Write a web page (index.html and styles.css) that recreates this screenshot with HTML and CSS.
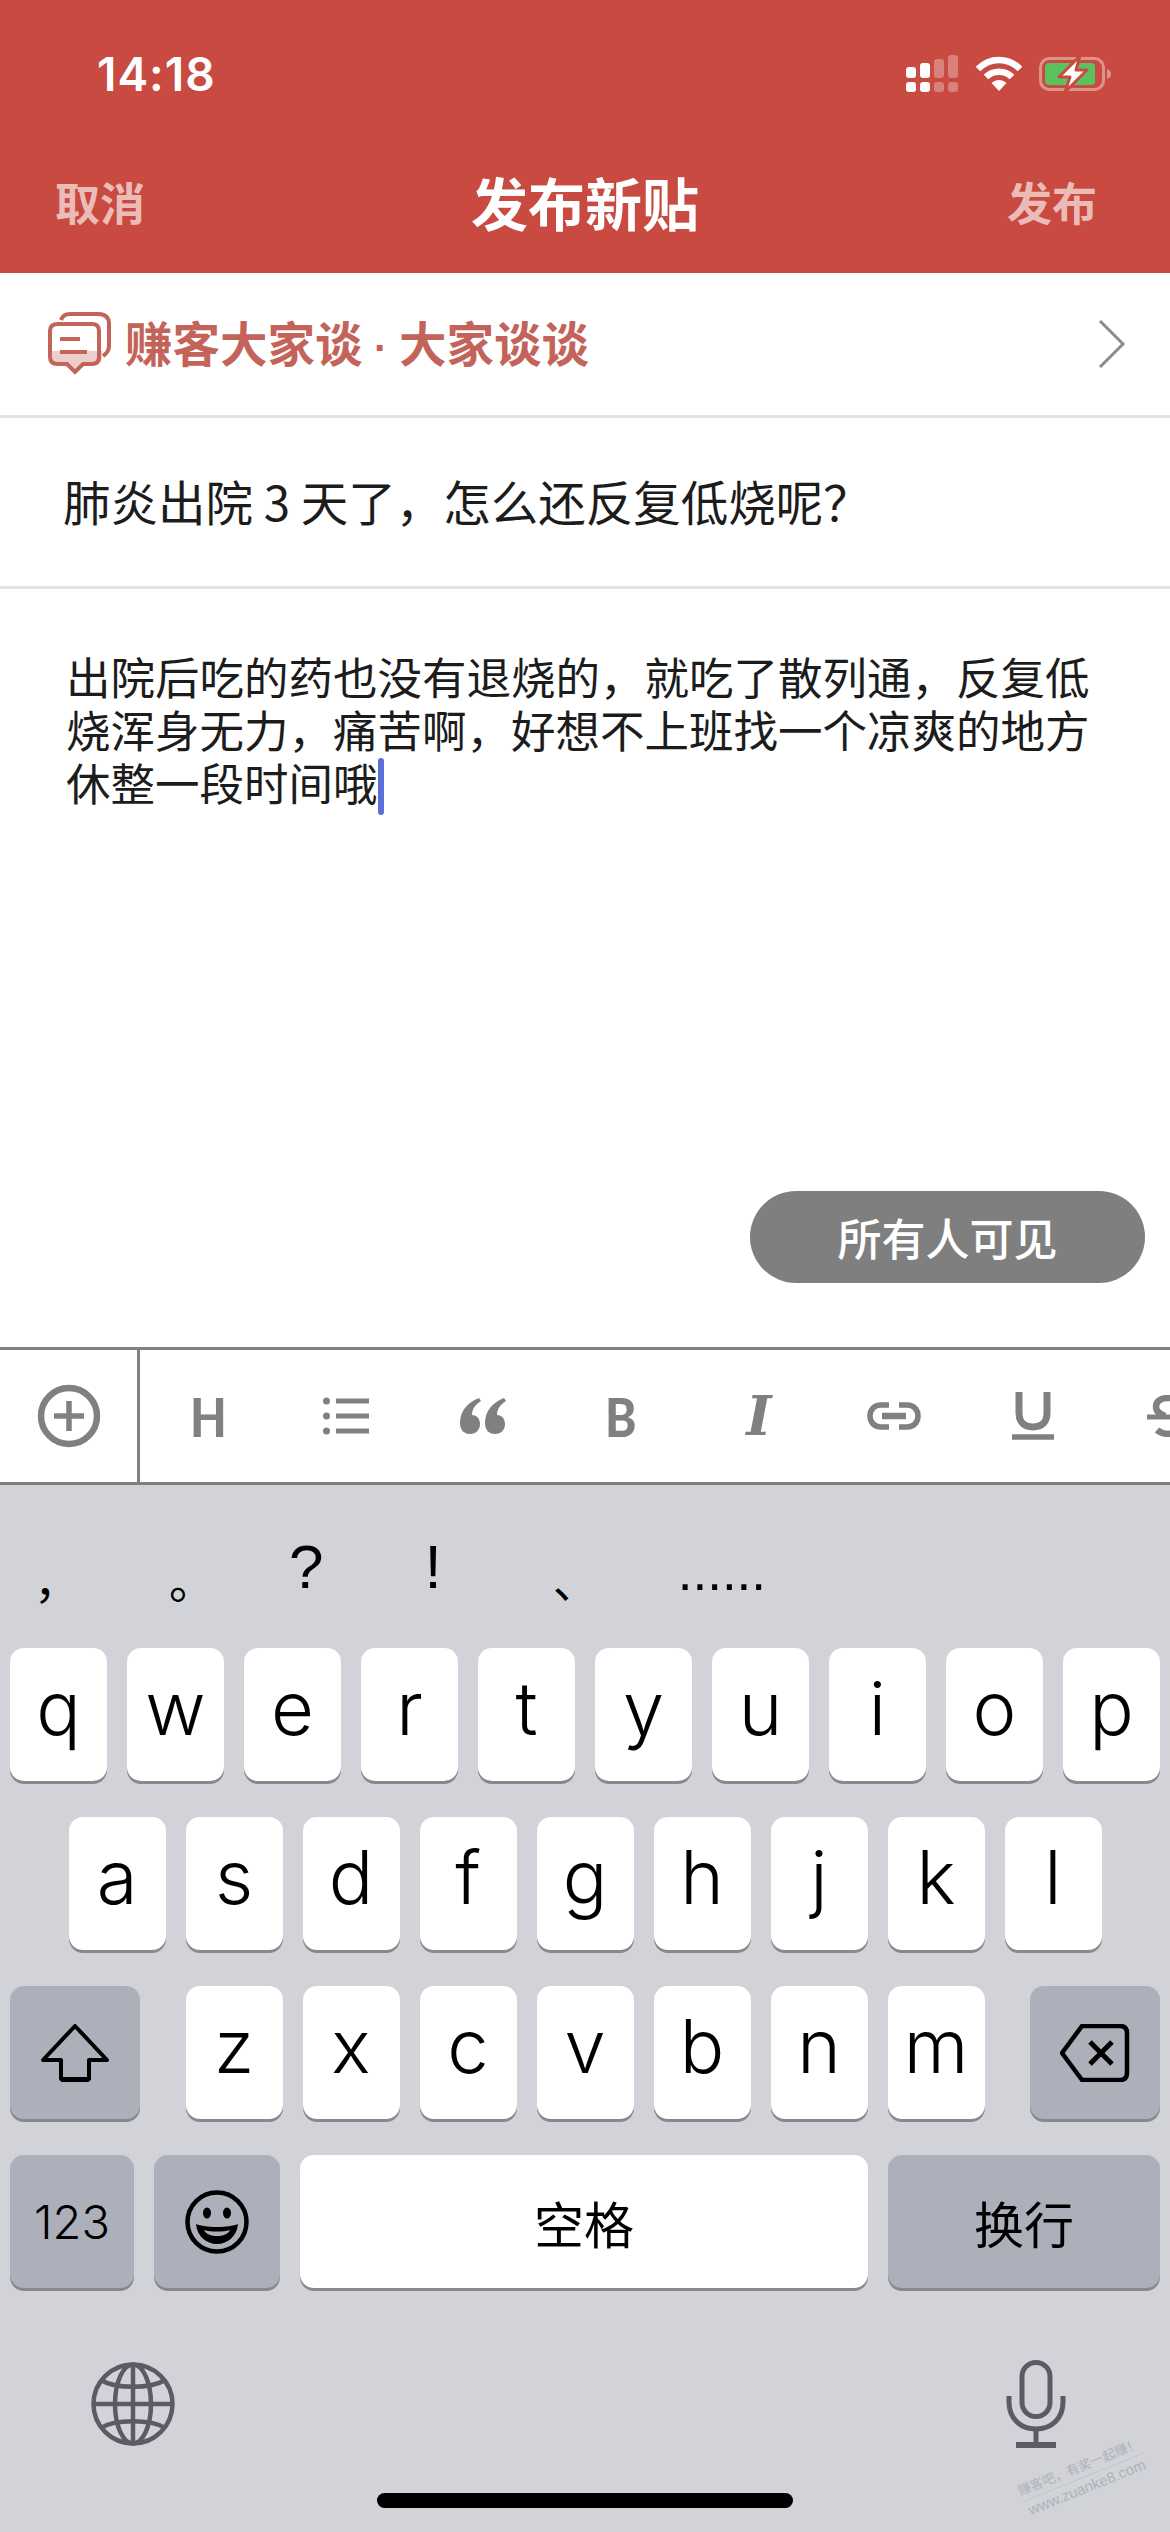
FILE: index.html
```html
<!DOCTYPE html>
<html lang="zh-CN">
<head>
  <meta charset="UTF-8" />
  <meta name="viewport" content="width=device-width, initial-scale=1.0"/>
  <title>发布新贴</title>
  <link rel="stylesheet" href="styles.css">
</head>

<body>
  <div class="phone">
    <header class="header">
      <div class="status">
        <span class="time">14:18</span>
        <div class="status-icons">
          <svg class="signal" width="53" height="38" viewBox="0 0 53 38" fill="#fff">
            <rect x="0" y="12" width="10" height="11" rx="3"/>
            <rect x="0" y="27" width="10" height="10" rx="3"/>
            <rect x="14" y="8" width="10" height="15" rx="3"/>
            <rect x="14" y="27" width="10" height="10" rx="3"/>
            <g opacity=".3">
              <rect x="28" y="4" width="10" height="19" rx="3"/>
              <rect x="28" y="27" width="10" height="10" rx="3"/>
              <rect x="42" y="0" width="10" height="23" rx="3"/>
              <rect x="42" y="27" width="10" height="10" rx="3"/>
            </g>
          </svg>
          <svg class="wifi" width="48" height="36" viewBox="0 0 48 36" fill="none" stroke="#fff" stroke-width="6.5">
            <path d="M3 13 C15 1 33 1 45 13"/>
            <path d="M11 21 C18 14 30 14 37 21"/>
            <path d="M16.500 27 L24 35 L31.500 27 C27 23 21 23 16.500 27 Z" fill="#fff" stroke="none"/>
          </svg>
          <svg class="battery" width="73" height="38" viewBox="0 0 73 38">
            <rect x="1.500" y="3.500" width="63" height="31" rx="9" fill="none" stroke="#fff" stroke-opacity=".4" stroke-width="3"/>
            <rect x="6" y="8" width="50" height="22" rx="4" fill="#5cc25f"/>
            <path d="M68 14 C71 15 72 17 72 19 C72 21 71 23 68 24 Z" fill="#fff" fill-opacity=".4"/>
            <path d="M41 1 L20 22 L31 22 L26 37 L48 15 L37 15 Z" fill="#fff" stroke="#c94a40" stroke-width="3" stroke-linejoin="round"/>
          </svg>
        </div>
      </div>
      <nav class="navbar">
        <a class="nav-link">取消</a>
        <h1 class="nav-title">发布新贴</h1>
        <a class="nav-link nav-right">发布</a>
      </nav>
    </header>

    <main class="composer">
      <div class="topic">
        <svg class="topic-icon" width="66" height="66" viewBox="0 0 66 66" fill="none" stroke="#c4635a" stroke-width="4">
          <path d="M5 40 H56 V47 Q56 53 50 53 H37 L29 61 L21 53 H12 Q6 53 6 47 Z" fill="#eccfcb" stroke="none"/>
          <path d="M12 13 H46 Q53 13 53 20 V46 Q53 53 46 53 H37 L29 61 L21 53 H12 Q4 53 4 46 V20 Q4 13 12 13 Z"/>
          <path d="M15 9 Q17 3 24 3 H52 Q63 3 63 13 V35 Q63 41 57 45"/>
          <path d="M14 28 H34 M14 41 H41"/>
        </svg>
        <span class="topic-name">赚客大家谈<span class="topic-dot"> · </span>大家谈谈</span>
        <svg class="topic-arrow" width="28" height="48" viewBox="0 0 28 48" fill="none" stroke="#8c8c8c" stroke-width="3">
          <path d="M2 1 L25 24 L2 47"/>
        </svg>
      </div>
      <div class="post-title">肺炎出院 3 天了，怎么还反复低烧呢？</div>
      <div class="post-body">
        <p class="post-text">出院后吃的药也没有退烧的，就吃了散列通，反复低烧浑身无力，痛苦啊，好想不上班找一个凉爽的地方休整一段时间哦<span class="caret"></span></p>
        <button class="visibility">所有人可见</button>
      </div>
    </main>

    <div class="toolbar">
      <div class="tool-add">
        <svg width="64" height="64" viewBox="0 0 64 64" fill="none" stroke="#808080">
          <circle cx="32" cy="32" r="28" stroke-width="6.500"/>
          <path d="M32 17 V47 M17 32 H47" stroke-width="5.500"/>
        </svg>
      </div>
      <div class="tools">
        <span class="tool tool-h">H</span>
        <span class="tool">
          <svg width="46" height="38" viewBox="0 0 46 38" fill="#808080">
            <circle cx="3.500" cy="4" r="3.500"/><circle cx="3.500" cy="19" r="3.500"/><circle cx="3.500" cy="34" r="3.500"/>
            <rect x="13" y="1.500" width="33" height="5"/><rect x="13" y="16.500" width="33" height="5"/><rect x="13" y="31.500" width="33" height="5"/>
          </svg>
        </span>
        <span class="tool">
          <svg width="46" height="36" viewBox="0 0 46 36" fill="#808080">
            <path d="M19 0 C8 4 0 13 0 25 C0 32 4 36 10 36 C16 36 20 32 20 26 C20 20 16 17 12 17 C12 11 15 7 21 3 Z"/>
            <path d="M44 0 C33 4 25 13 25 25 C25 32 29 36 35 36 C41 36 45 32 45 26 C45 20 41 17 37 17 C37 11 40 7 46 3 Z"/>
          </svg>
        </span>
        <span class="tool tool-b">B</span>
        <span class="tool tool-i">I</span>
        <span class="tool">
          <svg width="54" height="28" viewBox="0 0 54 28" fill="none" stroke="#808080" stroke-width="5.500">
            <path d="M22 3 H14 C7 3 3 8 3 14 C3 20 7 25 14 25 H22"/>
            <path d="M32 3 H40 C47 3 51 8 51 14 C51 20 47 25 40 25 H32"/>
            <path d="M15 14 H39" stroke-width="6.500"/>
          </svg>
        </span>
        <span class="tool tool-u">
          <svg width="42" height="48" viewBox="0 0 42 48" fill="none" stroke="#808080" stroke-width="7">
            <path d="M7 0 V21 C7 30 12 35 21 35 C30 35 35 30 35 21 V0"/>
            <path d="M0 45 H42" stroke-width="5.500"/>
          </svg>
        </span>
        <span class="tool tool-s">
          <svg width="44" height="42" viewBox="0 0 44 42" fill="none" stroke="#808080" stroke-width="6.500">
            <path d="M34 8 C30 3 24 3 21 3 C13 3 9 7 9 12 C9 17 13 19 18 21"/>
            <path d="M30 25 C33 28 33 33 30 36 C26 40 16 40 10 35"/>
            <path d="M0 22 H44" stroke-width="5"/>
          </svg>
        </span>
      </div>
    </div>

    <div class="keyboard">
      <div class="candidates">
        <span class="cand cand-comma">，</span>
        <span class="cand cand-stop">。</span>
        <span class="cand cand-ask">?</span>
        <span class="cand cand-bang">!</span>
        <span class="cand cand-pause">、</span>
        <span class="cand cand-dots">......</span>
      </div>

      <div class="key-row">
        <span class="key">q</span><span class="key">w</span><span class="key">e</span><span class="key">r</span><span class="key">t</span>
        <span class="key">y</span><span class="key">u</span><span class="key">i</span><span class="key">o</span><span class="key">p</span>
      </div>
      <div class="key-row">
        <span class="key">a</span><span class="key">s</span><span class="key">d</span><span class="key">f</span><span class="key">g</span>
        <span class="key">h</span><span class="key">j</span><span class="key">k</span><span class="key">l</span>
      </div>
      <div class="key-row key-row-split">
        <span class="key key-fn key-side">
          <svg width="68" height="58" viewBox="0 0 68 58" fill="none" stroke="#000" stroke-width="4" stroke-linejoin="round">
            <path d="M34 2 L66 36 H48 V55 H20 V36 H2 Z"/>
            <path d="M20 56 H48" stroke-width="5"/>
          </svg>
        </span>
        <div class="letters">
          <span class="key">z</span><span class="key">x</span><span class="key">c</span><span class="key">v</span>
          <span class="key">b</span><span class="key">n</span><span class="key">m</span>
        </div>
        <span class="key key-fn key-side">
          <svg width="70" height="58" viewBox="0 0 70 58" fill="none" stroke="#000" stroke-width="4.500" stroke-linejoin="round">
            <path d="M22 2 H60 Q67 2 67 9 V49 Q67 56 60 56 H22 L2 29 Z"/>
            <path d="M30 18 L52 40 M52 18 L30 40" stroke-width="5"/>
          </svg>
        </span>
      </div>
      <div class="key-row">
        <span class="key key-fn key-123">123</span>
        <span class="key key-fn key-emoji">
          <svg width="64" height="64" viewBox="0 0 64 64" fill="none" stroke="#000" stroke-width="4.500">
            <circle cx="32" cy="32" r="29.500"/>
            <ellipse cx="22" cy="23" rx="4" ry="5.500" fill="#000" stroke="none"/>
            <ellipse cx="42" cy="23" rx="4" ry="5.500" fill="#000" stroke="none"/>
            <path d="M11 34 C20 38 44 38 53 34 C52 46 43 54 32 54 C21 54 12 46 11 34 Z" fill="#000" stroke="none"/>
            <path d="M19 40 C26 42 38 42 45 40 C43 44 38 46 32 46 C26 46 21 44 19 40 Z" fill="#adb0ba" stroke="none"/>
          </svg>
        </span>
        <span class="key key-space">空格</span>
        <span class="key key-fn key-return">换行</span>
      </div>

      <div class="kb-bottom">
        <svg width="84" height="84" viewBox="0 0 84 84" fill="none" stroke="#5b5c63" stroke-width="4.500">
          <circle cx="42" cy="42" r="39.500"/>
          <ellipse cx="42" cy="42" rx="18" ry="39.500"/>
          <path d="M42 2 V82 M2 42 H82"/>
          <path d="M10 18 C24 27 60 27 74 18 M10 66 C24 57 60 57 74 66"/>
        </svg>
        <svg width="60" height="88" viewBox="0 0 60 88" fill="none" stroke="#5b5c63" stroke-width="5">
          <rect x="16" y="2.500" width="28" height="54" rx="14"/>
          <path d="M3 36 V42 C3 58 14 69 30 69 C46 69 57 58 57 42 V36"/>
          <path d="M30 69 V84"/>
          <path d="M10 85 H50" stroke-width="6"/>
        </svg>
      </div>
      <div class="home-bar"></div>
      <div class="watermark"><div class="watermark-top">赚客吧，有奖一起赚！</div>www.zuanke8.com</div>
    </div>
  </div>
</body>
</html>
```

FILE: styles.css
```css
* {
  box-sizing: border-box;
}

body {
  margin: 0;
  background: #fff;
  font-family: "Liberation Sans", "Noto Sans CJK SC", sans-serif;
}

.phone {
  width: 1170px;
  height: 2532px;
  display: flex;
  flex-direction: column;
  overflow: hidden;
}

/* red header */
.header {
  flex: none;
  height: 273px;
  background: #c94a40;
  color: #fff;
}

.status {
  height: 148px;
  display: flex;
  justify-content: space-between;
  align-items: center;
  padding: 0 58px 0 97px;
}

.time {
  font-family: Inter, sans-serif;
  font-size: 46px;
  font-weight: 600;
  letter-spacing: 1px;
}

.status-icons {
  display: flex;
  align-items: center;
  gap: 16px;
}

.navbar {
  display: grid;
  grid-template-columns: 1fr auto 1fr;
  align-items: center;
  padding: 0 55px;
  height: 106px;
}

.nav-link {
  font-size: 45px;
  font-weight: 700;
  color: rgba(255, 255, 255, 0.65);
  font-family: "Noto Sans CJK SC", sans-serif;
}

.nav-right {
  text-align: right;
  margin-right: 18px;
}

.nav-title {
  margin: 0;
  font-family: "Noto Sans CJK SC", sans-serif;
  font-size: 57px;
  font-weight: 700;
}

/* post form */
.composer {
  flex: 1;
  display: flex;
  flex-direction: column;
  font-family: "Noto Sans CJK SC", sans-serif;
  color: #1c1c1c;
}

.topic {
  height: 145px;
  display: flex;
  align-items: center;
  padding: 0 44px 0 46px;
  border-bottom: 3px solid #e4e4e4;
}

.topic-name {
  flex: 1;
  margin-left: 13px;
  padding-bottom: 6px;
  font-size: 47.500px;
  font-weight: 700;
  color: #c4635a;
}

.topic-dot {
  font-family: "Liberation Sans", sans-serif;
  font-size: 41px;
}

.post-title {
  height: 171px;
  display: flex;
  align-items: center;
  padding: 0 0 3px 63px;
  font-size: 47.500px;
  border-bottom: 3px solid #e4e4e4;
}

.post-body {
  flex: 1;
  display: flex;
  flex-direction: column;
  padding: 60px 25px 64px 66px;
}

.post-text {
  margin: 0;
  font-size: 44.500px;
  line-height: 53px;
  width: 1045px;
}

.caret {
  display: inline-block;
  width: 6px;
  height: 57px;
  margin-bottom: -14px;
  background: #5b6fd8;
  border-radius: 3px;
}

.visibility {
  align-self: flex-end;
  margin-top: auto;
  width: 395px;
  height: 92px;
  border: none;
  border-radius: 46px;
  background: #7f7f7f;
  color: #fff;
  font-family: inherit;
  font-size: 44px;
  font-weight: 500;
}

/* editor toolbar */
.toolbar {
  flex: none;
  height: 138px;
  display: flex;
  background: #fff;
  border-top: 3px solid #808080;
  border-bottom: 3px solid #808080;
  overflow: hidden;
}

.tool-add {
  flex: none;
  width: 140px;
  display: flex;
  justify-content: center;
  align-items: center;
  border-right: 3px solid #808080;
}

.tools {
  display: flex;
  color: #808080;
}

.tool {
  flex: none;
  width: 137px;
  display: flex;
  justify-content: center;
  align-items: center;
}

.tool-h,
.tool-b {
  font-family: Lato, sans-serif;
  font-size: 54px;
  font-weight: 900;
  transform: scaleX(0.88);
}

.tool-b {
  padding-left: 3px;
}

.tool-i {
  padding-left: 5px;
  font-family: "DejaVu Serif", serif;
  font-size: 54px;
  font-weight: 700;
  font-style: italic;
}

.tool-u {
  padding-left: 5px;
}

.tool-s {
  justify-content: flex-start;
  padding-left: 48px;
}

/* keyboard */
.keyboard {
  position: relative;
  flex: none;
  height: 1047px;
  background: #d1d3d9;
  padding: 0 10px;
}

.candidates {
  height: 163px;
  display: flex;
  align-items: baseline;
  font-family: "Noto Sans CJK SC", sans-serif;
  font-size: 46px;
  color: #000;
  padding-top: 62px;
}

.cand {
  line-height: 60px;
}

.cand-comma {
  margin-left: 24px;
}

.cand-stop {
  margin-left: 89px;
}

.cand-ask,
.cand-bang {
  font-family: "Liberation Sans", sans-serif;
  font-size: 62px;
  transform: translateY(-10px);
}

.cand-ask {
  margin-left: 74px;
}

.cand-bang {
  margin-left: 101px;
}

.cand-pause {
  margin-left: 111px;
}

.cand-dots {
  margin-left: 79px;
  font-family: "Liberation Sans", sans-serif;
  font-size: 53px;
  transform: translateY(-8px);
}

.key-row {
  display: flex;
  justify-content: center;
  gap: 20px;
  margin-bottom: 36px;
}

.key-row-split {
  justify-content: space-between;
}

.letters {
  display: flex;
  gap: 20px;
}

.key {
  flex: none;
  width: 97px;
  height: 133px;
  display: flex;
  justify-content: center;
  align-items: center;
  background: #fff;
  border-radius: 14px;
  box-shadow: 0 3px 0 #88898d;
  font-family: Inter, sans-serif;
  font-size: 74px;
  font-weight: 300;
  line-height: 1;
  padding-bottom: 14px;
  color: #000;
}

.key-fn {
  background: #adb0ba;
}

.key-side {
  width: 130px;
  padding-bottom: 0;
}

.key-123 {
  width: 124px;
  font-size: 47px;
  padding-bottom: 0;
}

.key-emoji {
  width: 126px;
  padding-bottom: 0;
}

.key-space,
.key-return {
  font-size: 50px;
  font-family: "Noto Sans CJK SC", sans-serif;
  font-weight: 400;
  padding-bottom: 0;
}

.key-space {
  width: 568px;
}

.key-return {
  width: 272px;
}

.kb-bottom {
  display: flex;
  justify-content: space-between;
  align-items: center;
  padding: 0 94px 0 81px;
  margin-top: 72px;
  height: 88px;
}

.home-bar {
  width: 416px;
  height: 15px;
  margin: 45px auto 0;
  border-radius: 8px;
  background: #000;
}

.watermark {
  position: absolute;
  right: 22px;
  bottom: 34px;
  font-size: 15px;
  line-height: 20px;
  color: #b0b2b8;
  text-align: center;
  transform: rotate(-22deg);
}

.watermark-top {
  font-size: 13px;
  border-bottom: 1px solid #c0c2c8;
}
```
